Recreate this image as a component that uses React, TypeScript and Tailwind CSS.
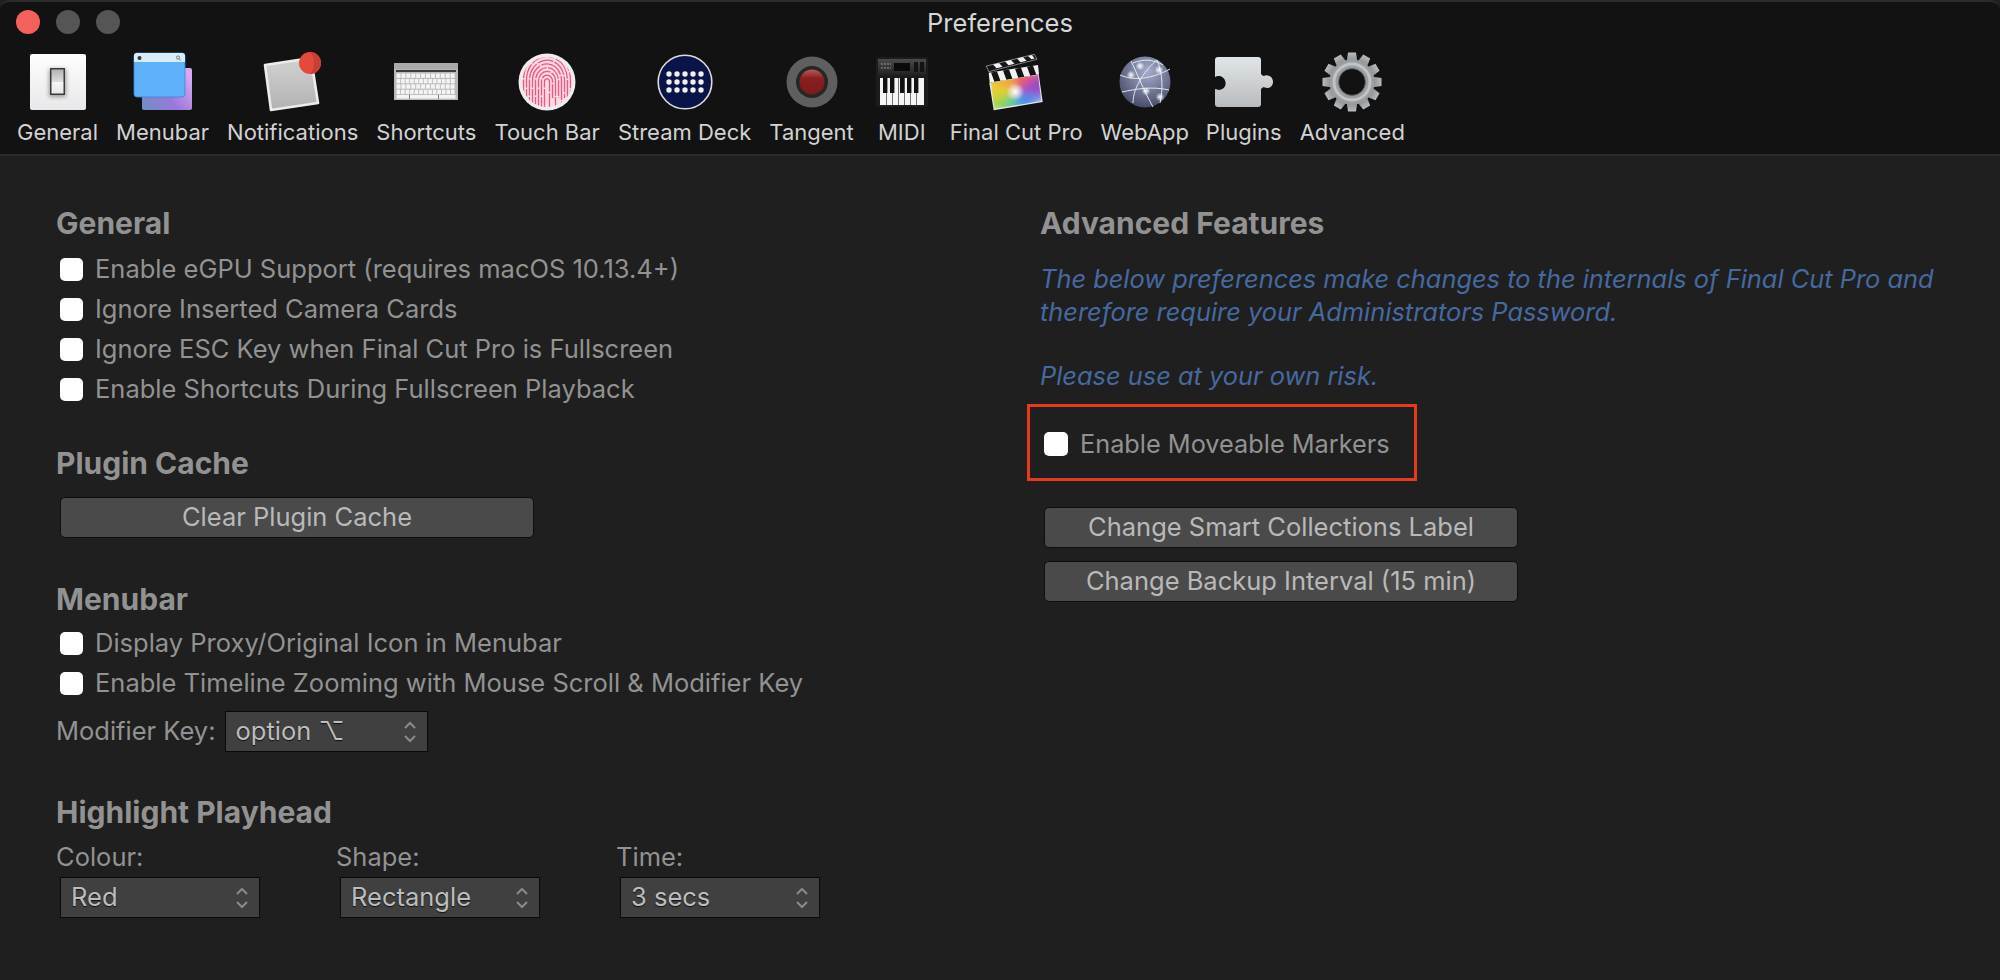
import type { ReactNode } from 'react';

function GeneralIcon() {
  return (
    <svg width="58" height="58" viewBox="0 0 58 58">
      <defs>
        <linearGradient id="sw" x1="0" y1="0" x2="0" y2="1">
          <stop offset="0" stopColor="#fefefe" />
          <stop offset="1" stopColor="#e8e8ea" />
        </linearGradient>
        <linearGradient id="sw2" x1="0" y1="0" x2="0" y2="1">
          <stop offset="0" stopColor="#b4b4b4" />
          <stop offset="0.5" stopColor="#dcdcdc" />
          <stop offset="0.51" stopColor="#f6f6f6" />
          <stop offset="1" stopColor="#e8e8e8" />
        </linearGradient>
        <filter id="swb" x="-40%" y="-40%" width="180%" height="180%">
          <feGaussianBlur stdDeviation="2" />
        </filter>
      </defs>
      <rect x="1" y="1" width="56" height="56" rx="2" fill="url(#sw)" />
      <rect x="20" y="16" width="17" height="28" fill="#9a9a9a" filter="url(#swb)" />
      <rect x="21" y="15" width="15" height="27" fill="#3a3a3a" />
      <rect x="22.500" y="16.500" width="12" height="24" fill="url(#sw2)" />
    </svg>
  );
}

function MenubarIcon() {
  return (
    <svg width="60" height="60" viewBox="0 0 60 60">
      <defs>
        <linearGradient id="mb" x1="0" y1="1" x2="1" y2="0.3">
          <stop offset="0" stopColor="#6f8fc4" />
          <stop offset="0.5" stopColor="#9a78dc" />
          <stop offset="1" stopColor="#d8a8f0" />
        </linearGradient>
      </defs>
      <rect x="9" y="16" width="50" height="42" rx="2" fill="url(#mb)" />
      <rect x="1" y="1" width="51" height="44" rx="3" fill="#5fb0fb" stroke="#3c86cc" strokeWidth="0.8" />
      <path d="M1 4a3 3 0 0 1 3-3h45a3 3 0 0 1 3 3v6H1z" fill="#d8ecfd" />
      <circle cx="6.500" cy="6" r="2" fill="#334" />
      <circle cx="45" cy="5.500" r="1.600" fill="none" stroke="#567" strokeWidth="0.8" />
      <path d="M46 6.700l1.700 1.700" stroke="#567" strokeWidth="0.8" />
    </svg>
  );
}

function NotificationsIcon() {
  return (
    <svg width="60" height="60" viewBox="0 0 60 60">
      <defs>
        <linearGradient id="nt" x1="0" y1="0" x2="0" y2="1">
          <stop offset="0" stopColor="#d2d2d2" />
          <stop offset="1" stopColor="#b2b2b2" />
        </linearGradient>
      </defs>
      <path d="M2 13L48 6l7 45-47 7z" fill="url(#nt)" stroke="#ececec" strokeWidth="2.600" strokeLinejoin="round" />
      <circle cx="47" cy="11" r="11" fill="#e5493c" />
      <path d="M47 0a11 11 0 0 1 0 22c3-3 4-7 4-11s-1-8-4-11z" fill="#c93f35" />
    </svg>
  );
}

function ShortcutsIcon() {
  const rows = [12, 13, 12, 13];
  return (
    <svg width="64" height="37" viewBox="0 0 64 37">
      <rect x="0" y="0" width="64" height="37" fill="#b9b9b9" />
      <rect x="0" y="0" width="64" height="6" fill="#a9a9a9" />
      <rect x="2" y="7" width="60" height="2" fill="#3d3d3d" />
      {rows.map((count, r) =>
        Array.from({ length: count }).map((_, i) => (
          <rect
            key={`${r}-${i}`}
            x={2.500 + i * (59 / count)}
            y={10.500 + r * 5.400}
            width={59 / count - 0.900}
            height="4.400"
            fill="#f4f4f4"
          />
        )),
      )}
      <rect x="2.500" y="32" width="59" height="3.600" fill="#f4f4f4" />
      <rect x="15" y="32" width="1" height="4" fill="#777" />
      <rect x="44" y="32" width="1" height="4" fill="#777" />
    </svg>
  );
}

function TouchBarIcon() {
  const radii = [2.500, 5.500, 8.500, 11.500, 14.500, 17.500, 20.500, 23.500, 26.500];
  return (
    <svg width="58" height="58" viewBox="0 0 58 58">
      <defs>
        <clipPath id="tb">
          <circle cx="29" cy="29" r="25" />
        </clipPath>
      </defs>
      <circle cx="29" cy="29" r="28.500" fill="#ededed" />
      <g clipPath="url(#tb)" fill="none" stroke="#f2557f" strokeWidth="1.300">
        <rect x="2" y="2" width="54" height="54" fill="#fbdbe4" stroke="none" />
        {radii.map((r, i) => (
          <path
            key={r}
            d={`M${29 - r} 60V${29 - r * 0.1}a${r} ${r * 1.15} 0 0 1 ${r * 2} 0V${i % 2 ? 45 : 60}`}
            strokeDasharray={i % 2 ? '16 1.500' : '24 1.500'}
          />
        ))}
      </g>
    </svg>
  );
}

function StreamDeckIcon() {
  return (
    <svg width="56" height="56" viewBox="0 0 56 56">
      <circle cx="28" cy="28" r="26.800" fill="#0b1449" stroke="#dcdcdc" strokeWidth="1.600" />
      {[0, 1, 2].map((r) =>
        [0, 1, 2, 3, 4].map((c) => (
          <circle key={`${r}${c}`} cx={12 + c * 8} cy={20 + r * 8} r="2.700" fill="#f0f0f0" />
        )),
      )}
    </svg>
  );
}

function TangentIcon() {
  return (
    <svg width="52" height="52" viewBox="0 0 52 52">
      <defs>
        <linearGradient id="tg" x1="0" y1="0" x2="0" y2="1">
          <stop offset="0" stopColor="#b85a5a" />
          <stop offset="0.35" stopColor="#8a1f1f" />
          <stop offset="1" stopColor="#7a1b1b" />
        </linearGradient>
      </defs>
      <circle cx="26" cy="26" r="25.500" fill="#5f5f5f" />
      <circle cx="26" cy="26" r="16" fill="#262626" />
      <circle cx="26" cy="26" r="12.500" fill="url(#tg)" />
    </svg>
  );
}

function MidiIcon() {
  return (
    <svg width="52" height="50" viewBox="0 0 52 50">
      <defs>
        <linearGradient id="md" x1="0" y1="0" x2="0" y2="1">
          <stop offset="0" stopColor="#4a4a4a" />
          <stop offset="1" stopColor="#222" />
        </linearGradient>
      </defs>
      <rect x="0" y="0" width="52" height="50" rx="1" fill="#1c1c1c" />
      <rect x="2" y="2" width="48" height="16" fill="url(#md)" />
      <rect x="18" y="6" width="16" height="8" fill="#0a0a0a" />
      <path d="M5 7h10M5 11h10" stroke="#999" strokeWidth="1.200" strokeDasharray="2 1" />
      <rect x="38" y="5" width="4" height="10" fill="#141414" />
      <rect x="44" y="5" width="4" height="10" fill="#141414" />
      <rect x="4" y="21" width="44" height="27" fill="#f5f5f5" />
      {[10, 16, 22, 28, 34, 40].map((x) => (
        <rect key={x} x={x} y="21" width="0.800" height="27" fill="#555" />
      ))}
      {[7, 14, 24, 31, 38].map((x) => (
        <rect key={x} x={x} y="21" width="4.400" height="15" fill="#111" />
      ))}
    </svg>
  );
}

function FinalCutIcon() {
  return (
    <svg width="62" height="62" viewBox="0 0 62 62">
      <defs>
        <clipPath id="fcc">
          <path d="M6 31.700L53 24l3.300 26L9.300 57.700z" />
        </clipPath>
        <filter id="fcb" x="-30%" y="-30%" width="160%" height="160%">
          <feGaussianBlur stdDeviation="4" />
        </filter>
        <radialGradient id="fcw">
          <stop offset="0" stopColor="#ffffff" />
          <stop offset="1" stopColor="#ffffff" stopOpacity="0" />
        </radialGradient>
      </defs>
      <path d="M1.300 15L49.300 3.300 52 8.300 3.700 20.700z" fill="#151515" stroke="#eee" strokeWidth="0.500" />
      <path d="M8 13.500l6-1.500 3.500 3.700-6 1.600zM20 10.500l6-1.500 3.500 3.700-6 1.600zM32 7.500l6-1.500 3.500 3.700-6 1.600zM43 5l4-1 2.500 3.500-3 .8z" fill="#f2f2f2" />
      <path d="M3.700 21.700L53 14l1 9.300L4.700 31.700z" fill="#f2f2f2" />
      <path d="M6 21.500l6-1 3.500 9.500-6 1zM18 19.600l6-1 3.500 9.500-6 1zM30 17.700l6-1 3.500 9.500-6 1zM42 15.800l6-1 3.500 9.500-6 1z" fill="#141414" />
      <path d="M4.300 31.700L53.700 23.300 57.700 51 8.700 59.300z" fill="#e6e6e6" />
      <g clipPath="url(#fcc)">
        <g filter="url(#fcb)">
          <path d="M30 41L0 28 30 18z" fill="#f2a83a" />
          <path d="M30 41L30 18 62 18z" fill="#ec5a66" />
          <path d="M30 41L62 18 62 46z" fill="#9a4ac8" />
          <path d="M30 41L62 46 36 62z" fill="#4a8cf0" />
          <path d="M30 41L36 62 14 62z" fill="#58c8a0" />
          <path d="M30 41L14 62 0 50z" fill="#96d640" />
          <path d="M30 41L0 50 0 28z" fill="#e8d030" />
        </g>
        <circle cx="30.300" cy="40.700" r="9" fill="url(#fcw)" />
      </g>
    </svg>
  );
}

function WebAppIcon() {
  const nodes = [
    [12, 19],
    [40, 14],
    [27, 35],
    [41, 41],
    [21, 10],
  ];
  return (
    <svg width="52" height="52" viewBox="0 0 52 52">
      <defs>
        <radialGradient id="wa" cx="0.55" cy="0.3" r="0.8">
          <stop offset="0" stopColor="#a6aecb" />
          <stop offset="1" stopColor="#3a3f5c" />
        </radialGradient>
        <radialGradient id="wan">
          <stop offset="0" stopColor="#ffffff" />
          <stop offset="1" stopColor="#ffffff" stopOpacity="0" />
        </radialGradient>
      </defs>
      <circle cx="26" cy="26" r="25.500" fill="url(#wa)" />
      <g fill="none" stroke="#e4e8f4" strokeWidth="1">
        <path d="M1 19c14 6 32 4 50-6" />
        <path d="M3 36c14-3 30-6 47-2" />
        <path d="M12 5c5 10 12 28 22 46" />
        <path d="M38 4C28 12 14 30 14 47" />
        <path d="M38 4c6 14 6 30 3 43" />
        <path d="M14 7c10-4 20-4 30 2" />
      </g>
      {nodes.map(([cx, cy]) => (
        <circle key={`${cx}-${cy}`} cx={cx} cy={cy} r="4.500" fill="url(#wan)" />
      ))}
    </svg>
  );
}

function PluginsIcon() {
  return (
    <svg width="60" height="52" viewBox="0 0 60 52">
      <defs>
        <linearGradient id="pl" x1="0" y1="0" x2="0" y2="1">
          <stop offset="0" stopColor="#e0e5e7" />
          <stop offset="1" stopColor="#b9bcbf" />
        </linearGradient>
      </defs>
      <path
        d="M4 1h40a3 3 0 0 1 3 3v14c1 1 2 2 3 2 1.500-1.500 8.500-1 9 5.500.3 6.500-7 7.500-9 5.500-1 0-2 1-3 2v15a3 3 0 0 1-3 3H4a3 3 0 0 1-3-3V33c2 .5 4 1.500 6 .5 4-1.500 5-4.500 4.500-7.500-.7-3.500-3.500-6-6.500-6-2 0-3 .5-4 1V4a3 3 0 0 1 3-3z"
        fill="url(#pl)"
      />
    </svg>
  );
}

function AdvancedIcon() {
  const teeth = Array.from({ length: 12 }).map((_, i) => i * 30);
  return (
    <svg width="62" height="62" viewBox="0 0 62 62">
      <defs>
        <linearGradient id="ad" x1="0" y1="0" x2="0" y2="1">
          <stop offset="0" stopColor="#b8bcbe" />
          <stop offset="1" stopColor="#84888a" />
        </linearGradient>
      </defs>
      {teeth.map((a) => (
        <path key={a} d="M27 1.500h8l1.500 10h-11z" fill="url(#ad)" transform={`rotate(${a} 31 31)`} />
      ))}
      <circle cx="31" cy="31" r="17" fill="none" stroke="#9a9ea0" strokeWidth="11" />
      <circle cx="31" cy="31" r="18" fill="none" stroke="#c0c4c6" strokeWidth="3" />
      <circle cx="31" cy="31" r="13.500" fill="#121212" stroke="#6c6e70" strokeWidth="1" />
    </svg>
  );
}

const toolbarItems: { label: string; icon: ReactNode; className?: string }[] = [
  { label: 'General', icon: <GeneralIcon /> },
  { label: 'Menubar', icon: <MenubarIcon /> },
  { label: 'Notifications', icon: <NotificationsIcon /> },
  { label: 'Shortcuts', icon: <ShortcutsIcon /> },
  { label: 'Touch Bar', icon: <TouchBarIcon /> },
  { label: 'Stream Deck', icon: <StreamDeckIcon /> },
  { label: 'Tangent', icon: <TangentIcon /> },
  { label: 'MIDI', icon: <MidiIcon />, className: 'ml-[4px]' },
  { label: 'Final Cut Pro', icon: <FinalCutIcon />, className: 'ml-[4px]' },
  { label: 'WebApp', icon: <WebAppIcon /> },
  { label: 'Plugins', icon: <PluginsIcon />, className: '-ml-[1px]' },
  { label: 'Advanced', icon: <AdvancedIcon /> },
];

function Heading({ children, className = '' }: { children: ReactNode; className?: string }) {
  return (
    <h2 className={`h-[32px] text-[30px] leading-[32px] font-bold text-[#929292] ${className}`}>
      {children}
    </h2>
  );
}

function CheckRow({ label }: { label: string }) {
  return (
    <label className="flex h-[40px] items-center gap-[12px] pl-[4px]">
      <span className="h-[23px] w-[23px] shrink-0 rounded-[5px] bg-white" />
      <span className="text-[25.500px] text-[#929292]">{label}</span>
    </label>
  );
}

function PushButton({ label, className = '' }: { label: string; className?: string }) {
  return (
    <button
      type="button"
      className={`block h-[41px] rounded-[5px] border border-[#0e0e0e] bg-[#4a4a4a] text-center text-[25.500px] text-[#b9b9b9] ${className}`}
    >
      {label}
    </button>
  );
}

function SelectBox({ value, className = '' }: { value: string; className?: string }) {
  return (
    <div
      className={`flex h-[41px] w-[200px] items-center justify-between border border-[#0a0a0a] bg-[#404040] pr-[10px] pl-[10px] text-[25.500px] text-[#bdbdbd] [text-shadow:0_1px_1px_#111] ${className}`}
    >
      <span>{value}</span>
      <svg width="14" height="24" viewBox="0 0 14 24" fill="none" stroke="#8a8a8a" strokeWidth="2">
        <path d="M2 8l5-5 5 5M2 16l5 5 5-5" />
      </svg>
    </div>
  );
}

function LabeledSelect({ label, value, className = '' }: { label: string; value: string; className?: string }) {
  return (
    <div className={className}>
      <div className="mb-[2px] h-[36px] text-[25.500px] leading-[36px] text-[#929292]">{label}</div>
      <SelectBox value={value} className="ml-[4px]" />
    </div>
  );
}

export default function App() {
  return (
    <div className="h-[980px] w-[2000px] overflow-hidden bg-[#1f1f1f] font-['Inter','Liberation_Sans',sans-serif]">
      <header className="h-[156px] rounded-t-[10px] border-t-2 border-b-2 border-t-[#2c2c2c] border-b-[#2a2a2a] bg-[#121212]">
        <div className="relative flex h-[43px] items-center justify-center">
          <div className="absolute top-[8px] left-[16px] flex gap-[16px]">
            <span className="h-[24px] w-[24px] rounded-full bg-[#f4615a]" />
            <span className="h-[24px] w-[24px] rounded-full bg-[#555555]" />
            <span className="h-[24px] w-[24px] rounded-full bg-[#555555]" />
          </div>
          <span className="text-[25.500px] text-[#d6d6d6]">Preferences</span>
        </div>
        <nav className="flex pl-[17px]">
          {toolbarItems.map((item) => (
            <div key={item.label} className={`mr-[18px] flex flex-col items-center ${item.className ?? ''}`}>
              <div className="flex h-[73px] items-center">{item.icon}</div>
              <span className="mt-[1px] text-[22px] leading-[26px] whitespace-nowrap text-[#d2d2d2]">{item.label}</span>
            </div>
          ))}
        </nav>
      </header>

      <main className="flex pt-[51px]">
        <section className="w-[1040px] shrink-0 pl-[56px]">
          <Heading>General</Heading>
          <div className="mt-[10px]">
            <CheckRow label="Enable eGPU Support (requires macOS 10.13.4+)" />
            <CheckRow label="Ignore Inserted Camera Cards" />
            <CheckRow label="Ignore ESC Key when Final Cut Pro is Fullscreen" />
            <CheckRow label="Enable Shortcuts During Fullscreen Playback" />
          </div>
          <Heading className="mt-[38px]">Plugin Cache</Heading>
          <PushButton label="Clear Plugin Cache" className="mt-[18px] ml-[4px] w-[474px]" />
          <Heading className="mt-[45px]">Menubar</Heading>
          <div className="mt-[8px]">
            <CheckRow label="Display Proxy/Original Icon in Menubar" />
            <CheckRow label="Enable Timeline Zooming with Mouse Scroll & Modifier Key" />
          </div>
          <div className="mt-[8px] flex items-center gap-[9px]">
            <span className="text-[25.500px] text-[#929292]">Modifier Key:</span>
            <SelectBox value="option ⌥" className="w-[203px]" />
          </div>
          <Heading className="mt-[44px]">Highlight Playhead</Heading>
          <div className="mt-[11px] flex">
            <LabeledSelect label="Colour:" value="Red" className="w-[280px]" />
            <LabeledSelect label="Shape:" value="Rectangle" className="w-[280px]" />
            <LabeledSelect label="Time:" value="3 secs" />
          </div>
        </section>

        <section className="flex-1">
          <Heading>Advanced Features</Heading>
          <div className="mt-[23px] text-[25.400px] leading-[33px] text-[#46699f] italic">
            <p>The below preferences make changes to the internals of Final Cut Pro and</p>
            <p>therefore require your Administrators Password.</p>
            <p className="mt-[31px]">Please use at your own risk.</p>
          </div>
          <div className="mt-[12px] -ml-[13px] flex h-[77px] w-[390px] items-center gap-[12px] border-[3px] border-[#e8391e] pt-[2px] pl-[14px]">
            <span className="h-[24px] w-[24px] shrink-0 rounded-[5px] bg-white" />
            <span className="text-[25.300px] text-[#929292]">Enable Moveable Markers</span>
          </div>
          <PushButton label="Change Smart Collections Label" className="mt-[26px] ml-[4px] w-[474px]" />
          <PushButton label="Change Backup Interval (15 min)" className="mt-[13px] ml-[4px] w-[474px]" />
        </section>
      </main>
    </div>
  );
}
